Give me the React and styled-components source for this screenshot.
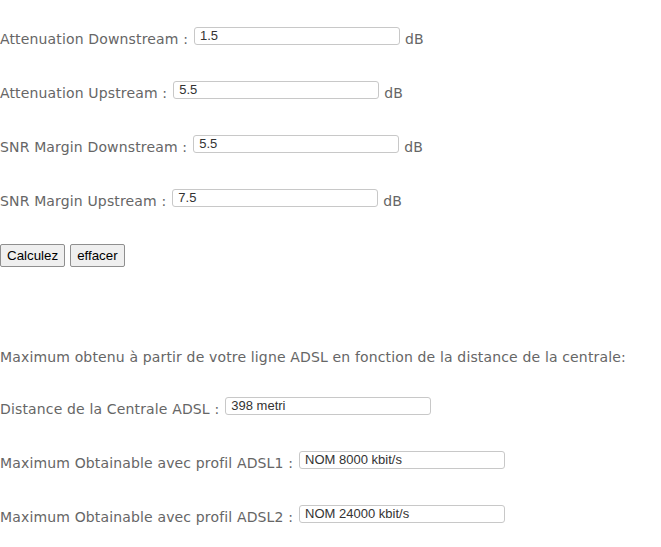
import React from 'react';
import styled, { createGlobalStyle } from 'styled-components';

const GlobalStyle = createGlobalStyle`
  body {
    margin: 0;
    background: #fff;
    font-family: "DejaVu Sans", Verdana, sans-serif;
    font-size: 14px;
    letter-spacing: 0.15px;
    color: #666;
  }
`;

const attenuation = [
  { label: 'Attenuation Downstream :', value: '1.5' },
  { label: 'Attenuation Upstream :', value: '5.5' },
  { label: 'SNR Margin Downstream :', value: '5.5' },
  { label: 'SNR Margin Upstream :', value: '7.5' },
];

const results = [
  { label: 'Distance de la Centrale ADSL :', value: '398 metri' },
  { label: 'Maximum Obtainable avec profil ADSL1 :', value: 'NOM 8000 kbit/s' },
  { label: 'Maximum Obtainable avec profil ADSL2 :', value: 'NOM 24000 kbit/s' },
];

const App = () => {
  return (
    <>
      <GlobalStyle />
      <Page>
        {attenuation.map((row) => (
          <Row key={row.label}>
            <Label>{row.label}</Label>
            <Field defaultValue={row.value} />
            <Unit>dB</Unit>
          </Row>
        ))}
        <Buttons>
          <Button type="button">Calculez</Button>
          <Button type="button">effacer</Button>
        </Buttons>
        <Intro>
          Maximum obtenu à partir de votre ligne ADSL en fonction de la distance de la centrale:
        </Intro>
        {results.map((row) => (
          <Row key={row.label}>
            <Label>{row.label}</Label>
            <Field defaultValue={row.value} readOnly />
          </Row>
        ))}
      </Page>
    </>
  );
};

export default App;

const Page = styled.form`
  display: flex;
  flex-direction: column;
  padding-top: 12px;
`;

const Row = styled.div`
  display: flex;
  align-items: center;
  height: 54px;
`;

const Label = styled.span`
  white-space: nowrap;
  margin-right: 6px;
`;

const Field = styled.input`
  box-sizing: border-box;
  width: 206px;
  height: 18px;
  margin: 0 0 6px;
  padding: 0 5px 2px;
  border: 1px solid #c8c8c8;
  border-radius: 3px;
  font-family: "Liberation Sans", Arial, sans-serif;
  font-size: 13px;
  letter-spacing: 0;
  color: #333;
  background: #fff;
  outline: none;
`;

const Unit = styled.span`
  margin-left: 5px;
`;

const Buttons = styled.div`
  display: flex;
  align-items: center;
  gap: 5px;
  height: 54px;
`;

const Button = styled.button`
  height: 23px;
  padding: 1px 6px;
  border: 1px solid #8f8f8f;
  border-radius: 2px;
  background: #efefef;
  font-family: "Liberation Sans", Arial, sans-serif;
  font-size: 13.33px;
  letter-spacing: 0;
  color: #000;
`;

const Intro = styled.p`
  margin: 63px 0 12px;
  height: 25px;
  line-height: 25px;
`;
